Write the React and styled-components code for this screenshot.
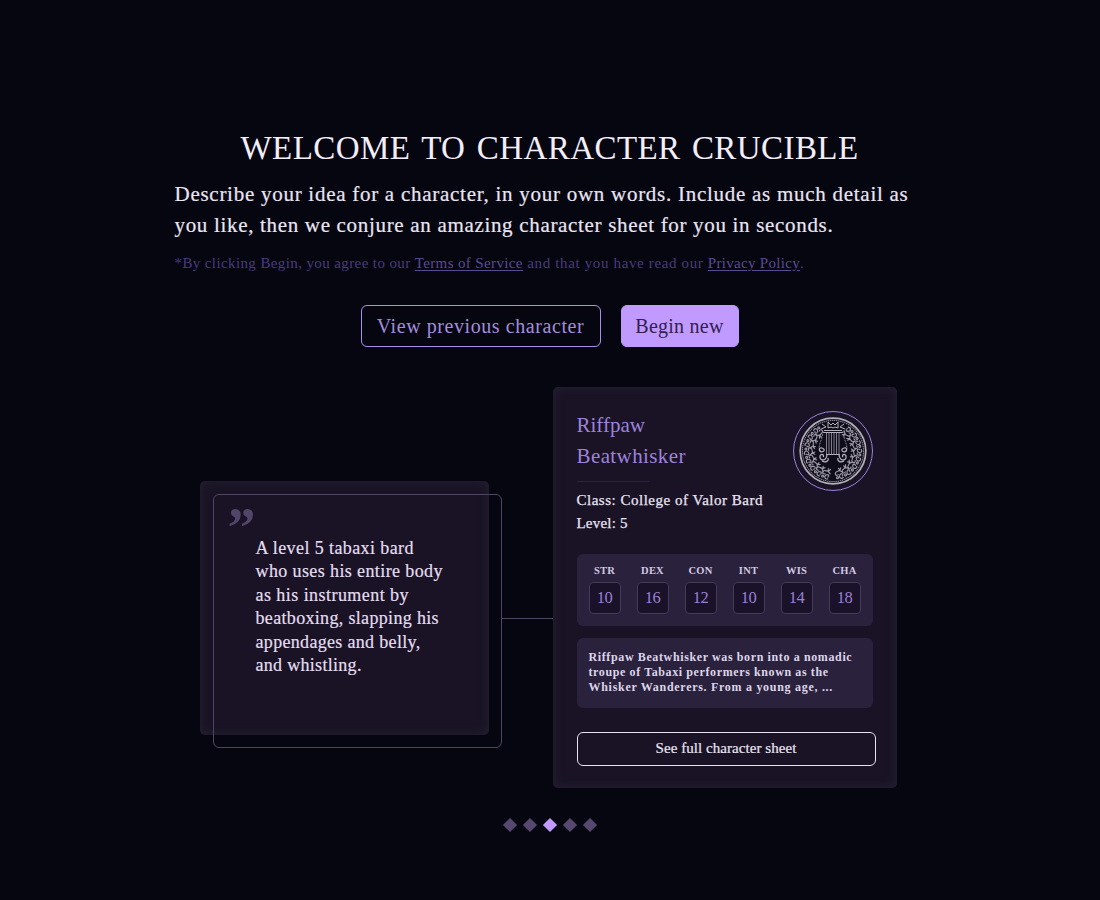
import React from "react";
import styled, { createGlobalStyle } from "styled-components";

const GlobalStyle = createGlobalStyle`
  *, *::after { box-sizing: border-box; }
  html, body { margin: 0; background: #060611; }
  body { font-family: "Liberation Serif", "Times New Roman", serif; color: #e6e0f0; }
  h1, h2, p { margin: 0; font-weight: 400; }
  button { font-family: inherit; cursor: pointer; padding: 0; }
`;

const Page = styled.main`
  height: 900px;
  padding: 128px 1px 0 0;
  display: flex;
  flex-direction: column;
  align-items: center;
  background: #060611;
  overflow: hidden;
`;

const Title = styled.h1`
  font-size: 33px;
  line-height: 40px;
  letter-spacing: 0.42px;
  word-spacing: 2.8px;
  color: #f2eefa;
  white-space: nowrap;
`;

const Intro = styled.section`
  width: 750px;
  margin-top: 11px;
`;

const Line = styled.span`
  display: block;
  white-space: nowrap;
  letter-spacing: ${(p) => p.$track}px;
`;

const Lead = styled.p`
  font-size: 21px;
  line-height: 31px;
  color: #eae5f3;
  -webkit-text-stroke: 0.2px currentColor;
`;

const Terms = styled.p`
  margin-top: 12px;
  font-size: 15px;
  line-height: 20px;
  white-space: pre;
  color: #493b7d;
`;

const Phrase = styled.span`
  letter-spacing: ${(p) => p.$track}px;
`;

const TermsLink = styled.a`
  color: #5a4a94;
  text-decoration: underline;
  text-underline-offset: 2px;
  letter-spacing: ${(p) => p.$track}px;
`;

const Actions = styled.div`
  display: flex;
  gap: 20px;
  margin-top: 32px;
`;

const ActionButton = styled.button`
  width: ${(p) => (p.$primary ? 118 : 240)}px;
  height: 42px;
  border-radius: 6px;
  border: 1px solid ${(p) => (p.$primary ? "#c09aff" : "#a98ef0")};
  background: ${(p) => (p.$primary ? "#c09aff" : "transparent")};
  color: ${(p) => (p.$primary ? "#33204f" : "#a48ddd")};
  font-size: 20px;
  letter-spacing: ${(p) => (p.$primary ? 0.24 : 0.57)}px;
`;

const Showcase = styled.section`
  display: flex;
  align-items: flex-start;
  width: 697px;
  height: 401px;
  margin: 40px 3px 0 0;
`;

const QuoteCard = styled.blockquote`
  position: relative;
  width: 289px;
  height: 254px;
  margin: 94px 0 0;
  padding: 20px 0 0 28px;
  border-radius: 5px;
  background: #191325;
  box-shadow: inset 0 0 9px 2px #231f2f;
  &::after {
    content: "";
    position: absolute;
    top: 13px;
    left: 13px;
    width: 289px;
    height: 254px;
    border: 1px solid #4f4560;
    border-radius: 6px;
  }
`;

const QuoteMark = styled.div`
  height: 36px;
  font-size: 56px;
  font-weight: 700;
  line-height: 55px;
  color: #52456a;
`;

const QuoteText = styled.p`
  padding-left: 28px;
  font-size: 18px;
  line-height: 23.4px;
  color: #e4def0;
  -webkit-text-stroke: 0.2px currentColor;
`;

const Connector = styled.div`
  width: 51px;
  height: 1px;
  margin: 231px 0 0 13px;
  background: #4f4560;
`;

const Sheet = styled.article`
  width: 344px;
  height: 401px;
  padding: 23px 22px 22px 24px;
  border-radius: 5px;
  background: #191325;
  box-shadow: inset 0 0 9px 2px #231f2f;
`;

const SheetHeader = styled.header`
  display: flex;
  justify-content: space-between;
  height: 144px;
  padding-right: 2px;
`;

const Name = styled.h2`
  font-size: 21px;
  line-height: 31px;
  color: #9d83dc;
`;

const Divider = styled.div`
  width: 72px;
  height: 1px;
  margin: 9px 0 7px;
  background: #2b253b;
`;

const Facts = styled.p`
  font-size: 15px;
  line-height: 23px;
  color: #eae5f3;
  -webkit-text-stroke: 0.25px currentColor;
`;

const Emblem = styled.svg`
  width: 80px;
  height: 80px;
  margin-top: 1px;
`;

const Panel = styled.div`
  width: 296px;
  border-radius: 6px;
  background: #2a213c;
`;

const Stats = styled(Panel)`
  display: flex;
  gap: 16px;
  height: 72px;
  padding: 10px 12px;
`;

const Stat = styled.div`
  display: flex;
  flex-direction: column;
  align-items: center;
  gap: 4px;
  width: 32px;
`;

const StatLabel = styled.span`
  font-size: 10.5px;
  font-weight: 700;
  line-height: 14px;
  letter-spacing: 0.2px;
  color: #d2c9e2;
`;

const StatValue = styled.span`
  display: flex;
  align-items: center;
  justify-content: center;
  width: 32px;
  height: 32px;
  border: 1px solid #453a59;
  border-radius: 4px;
  background: #191228;
  color: #9a80d6;
  font-size: 16.5px;
  letter-spacing: -0.5px;
`;

const Bio = styled(Panel)`
  height: 70px;
  margin-top: 12px;
  padding: 12px;
  font-size: 12px;
  font-weight: 700;
  line-height: 15px;
  color: #ddd5ea;
`;

const SheetButton = styled.button`
  width: 299px;
  height: 34px;
  margin-top: 24px;
  padding-bottom: 2px;
  border: 1px solid #e8e3f0;
  border-radius: 6px;
  background: transparent;
  color: #eae5f3;
  font-size: 15px;
  letter-spacing: 0.06px;
  -webkit-text-stroke: 0.2px currentColor;
`;

const Pager = styled.nav`
  display: flex;
  gap: 10px;
  margin-top: 32px;
`;

const Dot = styled.span`
  width: 10px;
  height: 10px;
  transform: rotate(45deg);
  background: ${(p) => (p.$active ? "#c09aff" : "#56486e")};
`;

const STATS = [
  ["STR", 10],
  ["DEX", 16],
  ["CON", 12],
  ["INT", 10],
  ["WIS", 14],
  ["CHA", 18],
];

const LEAVES = [38, 56, 74, 92, 110, 128, 146, 164, 196, 214, 232, 250, 268, 286, 304, 322];

function BardEmblem() {
  return (
    <Emblem viewBox="0 0 80 80" fill="none">
      <circle cx="40" cy="40" r="39.5" stroke="#9b83dc" />
      <circle cx="40" cy="40" r="32.8" fill="#100d1b" stroke="#b4b0bb" strokeWidth="1.7" />
      <circle cx="40" cy="40" r="30.6" stroke="#8b8794" strokeWidth="1.1" strokeDasharray="1.4 .7" />
      <g stroke="#a19dab" strokeWidth="1.1">
        {LEAVES.map((a) => (
          <g key={a} transform={`rotate(${a} 40 40)`}>
            <path d="M37 12c3-2 5 1 3 3s-4 0-2-2M41 16c4-2 4 3 1 3s-4 2-2 3M36 17l3 2-2 3" />
            <circle cx="43" cy="13" r="1" />
          </g>
        ))}
      </g>
      <g stroke="#b4b0bb" strokeWidth="1">
        <path d="M35 11l3 3 2-2 2 2 3-3v6l-3-1-2 1-2-1-3 1zM29 13l4 3-5 2M51 13l-4 3 5 2" />
        <path d="M31 19.5h18M30 21.5h20" />
        <path stroke="#7f7b89" d="M33.5 22v21M36 22v21M38.5 22v21M41 22v21M43.5 22v21M46 22v21" />
        <path stroke="#84808e" d="M30 20c0 7-4 12-4 18M50 20c0 7 4 12 4 18" strokeDasharray="2 1" />
        <path d="M33 43.5h14" />
        <path strokeWidth="1.3" d="M34 44c-1 7-8 6-7 1 1-3 5-1 3 1M46 44c1 7 8 6 7 1-1-3-5-1-3 1" />
        <path strokeWidth="1.2" d="M29 41c-4-1-3-5 0-4s3 3 0 4M51 41c4-1 3-5 0-4s-3 3 0 4M29 50c4 2 7 0 6-3M51 50c-4 2-7 0-6-3" />
      </g>
    </Emblem>
  );
}

export default function App() {
  return (
    <>
      <GlobalStyle />
      <Page>
        <Title>WELCOME TO CHARACTER CRUCIBLE</Title>
        <Intro>
          <Lead>
            <Line $track={0.73}>Describe your idea for a character, in your own words. Include as much detail as</Line>
            <Line $track={0.68}>you like, then we conjure an amazing character sheet for you in seconds.</Line>
          </Lead>
          <Terms>
            <Phrase $track={0.39}>{"*By clicking Begin, you agree to our "}</Phrase>
            <TermsLink $track={0.37}>Terms of Service</TermsLink>
            <Phrase $track={0.64}>{" and that you have read our "}</Phrase>
            <TermsLink $track={0.3}>Privacy Policy</TermsLink>.
          </Terms>
        </Intro>
        <Actions>
          <ActionButton>View previous character</ActionButton>
          <ActionButton $primary>Begin new</ActionButton>
        </Actions>
        <Showcase>
          <QuoteCard>
            <QuoteMark>”</QuoteMark>
            <QuoteText>
              <Line $track={0.4}>A level 5 tabaxi bard</Line>
              <Line $track={0.39}>who uses his entire body</Line>
              <Line $track={0.45}>as his instrument by</Line>
              <Line $track={0.33}>beatboxing, slapping his</Line>
              <Line $track={0.32}>appendages and belly,</Line>
              <Line $track={0.3}>and whistling.</Line>
            </QuoteText>
          </QuoteCard>
          <Connector />
          <Sheet>
            <SheetHeader>
              <div>
                <Name>
                  <Line $track={0}>Riffpaw</Line>
                  <Line $track={0.4}>Beatwhisker</Line>
                </Name>
                <Divider />
                <Facts>
                  <Line $track={0.51}>Class: College of Valor Bard</Line>
                  <Line $track={0.2}>Level: 5</Line>
                </Facts>
              </div>
              <BardEmblem />
            </SheetHeader>
            <Stats>
              {STATS.map(([label, value]) => (
                <Stat key={label}>
                  <StatLabel>{label}</StatLabel>
                  <StatValue>{value}</StatValue>
                </Stat>
              ))}
            </Stats>
            <Bio>
              <Line $track={0.62}>Riffpaw Beatwhisker was born into a nomadic</Line>
              <Line $track={0.61}>troupe of Tabaxi performers known as the</Line>
              <Line $track={0.71}>Whisker Wanderers. From a young age, ...</Line>
            </Bio>
            <SheetButton>See full character sheet</SheetButton>
          </Sheet>
        </Showcase>
        <Pager>
          <Dot />
          <Dot />
          <Dot $active />
          <Dot />
          <Dot />
        </Pager>
      </Page>
    </>
  );
}
